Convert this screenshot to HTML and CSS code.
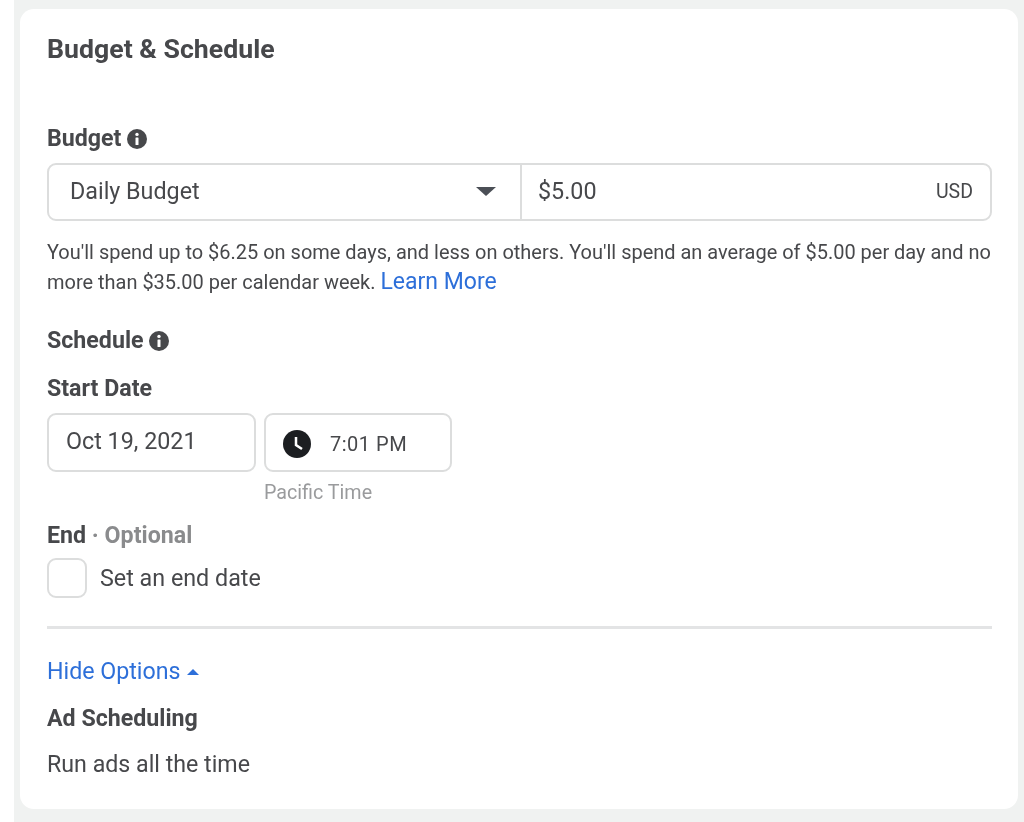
FILE: index.html
```html
<!DOCTYPE html><html lang="en">
<head>
  <meta charset="UTF-8">
  <title>Budget &amp; Schedule</title>
  <link rel="stylesheet" href="styles.css">
</head>
<body>
  <div class="page">
    <div class="card">
      <h2>Budget &amp; Schedule</h2>

      <div class="label budget-label">Budget
        <svg class="info" viewBox="0 0 20 20"><circle cx="10" cy="10" r="10"/><circle class="cut" cx="10" cy="5.4" r="1.7"/><rect class="cut" x="8.5" y="8.4" width="3" height="7.6" rx="0.6"/></svg>
      </div>
      <div class="budget-row">
        <div class="budget-type">
          <span>Daily Budget</span>
          <span class="caret-down"></span>
        </div>
        <div class="budget-value">
          <span>$5.00</span>
          <span class="currency">USD</span>
        </div>
      </div>
      <p class="note">You'll spend up to $6.25 on some days, and less on others. You'll spend an average of $5.00 per day and no more than $35.00 per calendar week. <a href="#">Learn More</a></p>

      <div class="label schedule-label">Schedule
        <svg class="info" viewBox="0 0 20 20"><circle cx="10" cy="10" r="10"/><circle class="cut" cx="10" cy="5.4" r="1.7"/><rect class="cut" x="8.5" y="8.4" width="3" height="7.6" rx="0.6"/></svg>
      </div>
      <div class="label start-label">Start Date</div>
      <div class="date-row">
        <div class="date-box">Oct 19, 2021</div>
        <div class="time-col">
          <div class="time-box">
            <svg class="clock" viewBox="0 0 28 28"><circle cx="14" cy="14" r="14"/><path d="M13 7v8l6 4" /></svg>
            <span>7:01 PM</span>
          </div>
          <div class="zone">Pacific Time</div>
        </div>
      </div>

      <div class="label end-label">End <span class="optional">· Optional</span></div>
      <div class="check-row">
        <span class="checkbox"></span>
        <span>Set an end date</span>
      </div>

      <hr>

      <a class="toggle" href="#">Hide Options <span class="caret-up"></span></a>
      <div class="label ad-label">Ad Scheduling</div>
      <div class="run">Run ads all the time</div>
    </div>
  </div>
</body>
</html>
```

FILE: styles.css
```css
html, body {
  margin: 0;
  padding: 0;
  background: #fff;
}
body {
  font-family: Roboto, 'Liberation Sans', sans-serif;
  color: #47484b;
  overflow: hidden;
}
.page {
  margin-left: 14px;
  height: 822px;
  box-sizing: border-box;
  padding: 9px 6px 13px 6px;
  background: #f0f2f1;
}
.card {
  height: 800px;
  box-sizing: border-box;
  background: #fff;
  border-radius: 14px;
  padding: 24px 26px 0 27px;
  filter: blur(0.7px);
}
h2 {
  margin: 0;
  font-size: 26.7px;
  line-height: 32px;
  font-weight: 700;
}
.label {
  font-size: 23.2px;
  line-height: 28px;
  font-weight: 700;
}
.info {
  width: 20px;
  height: 20px;
  vertical-align: -3px;
  fill: #47484b;
}
.info .cut {
  fill: #fff;
}
.budget-label {
  margin-top: 59px;
}
.budget-row {
  display: flex;
  height: 58px;
  margin-top: 11px;
  box-sizing: border-box;
  border: 2px solid #dcdddd;
  border-radius: 9px;
  font-size: 23.3px;
}
.budget-type {
  width: 473px;
  flex: none;
  box-sizing: border-box;
  padding: 0 24px 2px 21px;
  border-right: 2px solid #dcdddd;
  display: flex;
  align-items: center;
  justify-content: space-between;
}
.budget-value {
  flex: 1;
  padding: 0 17px 2px 16px;
  display: flex;
  align-items: center;
  justify-content: space-between;
}
.caret-down {
  width: 0;
  height: 0;
  border-left: 10px solid transparent;
  border-right: 10px solid transparent;
  border-top: 9px solid #4b4f56;
}
.currency {
  font-size: 19.5px;
}
.note {
  margin: 17px 0 0;
  font-size: 19.98px;
  line-height: 29px;
}
a {
  color: #2d6fd9;
  text-decoration: none;
}
.note a {
  font-size: 23px;
}
.schedule-label {
  margin-top: 29px;
}
.start-label {
  margin-top: 20px;
}
.date-row {
  display: flex;
  gap: 8px;
  margin-top: 11px;
  font-size: 23.3px;
}
.date-box, .time-box {
  height: 59px;
  box-sizing: border-box;
  border: 2px solid #dcdddd;
  border-radius: 9px;
}
.date-box {
  width: 209px;
  padding: 12px 17px;
}
.time-col {
  width: 188px;
}
.time-box {
  display: flex;
  align-items: center;
  gap: 19px;
  padding: 3px 0 0 17px;
  font-size: 20px;
  letter-spacing: 0.5px;
}
.clock {
  width: 28px;
  height: 28px;
  fill: #1c1e21;
}
.clock path {
  fill: none;
  stroke: #fff;
  stroke-width: 2.5;
}
.zone {
  margin-top: 9px;
  font-size: 19.7px;
  color: #9a9b9d;
}
.end-label {
  margin-top: 17px;
}
.optional {
  color: #8a8b8d;
}
.check-row {
  display: flex;
  align-items: center;
  gap: 13px;
  margin-top: 9px;
  font-size: 23.3px;
}
.checkbox {
  width: 40px;
  height: 40px;
  box-sizing: border-box;
  border: 2px solid #dcdddd;
  border-radius: 9px;
}
hr {
  margin: 28px 0 0;
  border: 0;
  height: 3px;
  background: #e3e4e5;
}
.toggle {
  display: block;
  margin-top: 27px;
  font-size: 23.2px;
  line-height: 30px;
}
.caret-up {
  display: inline-block;
  width: 0;
  height: 0;
  margin-left: 1px;
  vertical-align: 4px;
  border-left: 6px solid transparent;
  border-right: 6px solid transparent;
  border-bottom: 6px solid #2d6fd9;
}
.ad-label {
  margin-top: 18px;
}
.run {
  margin-top: 17px;
  font-size: 23.2px;
  line-height: 30px;
}
```
